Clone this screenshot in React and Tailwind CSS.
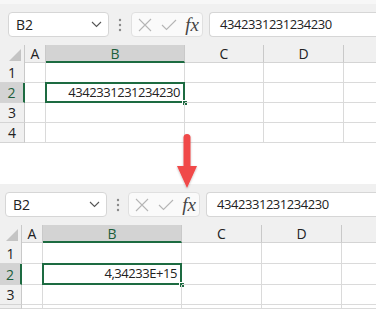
import React from "react";

function Chevron() {
  return (
    <svg width="11" height="7" viewBox="0 0 11 7">
      <path d="M1 1 L5.5 5.5 L10 1" fill="none" stroke="#555" strokeWidth="1.1" />
    </svg>
  );
}

function Dots() {
  return (
    <svg width="4" height="14" viewBox="0 0 4 14">
      <circle cx="2" cy="2" r="1.2" fill="#8a8a8a" />
      <circle cx="2" cy="7" r="1.2" fill="#8a8a8a" />
      <circle cx="2" cy="12" r="1.2" fill="#8a8a8a" />
    </svg>
  );
}

function CrossIcon() {
  return (
    <svg width="14" height="14" viewBox="0 0 14 14">
      <path d="M1 1 L13 13 M13 1 L1 13" stroke="#b5b5b5" strokeWidth="1.1" fill="none" />
    </svg>
  );
}

function CheckIcon() {
  return (
    <svg width="16" height="12" viewBox="0 0 16 12">
      <path d="M1 6 L5.5 10.5 L15 1" stroke="#b5b5b5" strokeWidth="1.1" fill="none" />
    </svg>
  );
}

function Toolbar({ pad, nameW, dotsW, btnW, formula }) {
  return (
    <div className={`flex items-start bg-[#f0f0f0] pb-[8px] pt-[8px] ${pad}`}>
      <div
        className={`flex h-[25px] items-center justify-between rounded-[4px] border border-[#d6d6d6] bg-white pl-[7px] pr-[6px] text-[14px] text-[#222] ${nameW}`}
      >
        <span>B2</span>
        <Chevron />
      </div>
      <div className={`flex h-[25px] items-center justify-center ${dotsW}`}>
        <Dots />
      </div>
      <div
        className={`flex h-[25px] items-center justify-between rounded-[4px] border border-[#e0e0e0] bg-[#fafafa] pl-[6px] pr-[3px] ${btnW}`}
      >
        <CrossIcon />
        <CheckIcon />
        <span className="font-['Liberation_Serif',serif] text-[19px] italic leading-none text-[#444]">fx</span>
      </div>
      <div className="ml-[6px] flex h-[25px] flex-1 items-center rounded-l-[4px] border border-r-0 border-[#d6d6d6] bg-white pl-[10px] text-[13px] tracking-[-0.45px] text-[#222]">
        {formula}
      </div>
    </div>
  );
}

function HeaderCell({ w, sel, last, children }) {
  return (
    <div
      className={`flex h-full items-center justify-center text-[14px] ${
        sel ? "border-b-2 border-b-[#1d6b41] bg-[#d3d3d3] text-[#1d5e3a]" : "border-b border-b-[#d4d4d4] text-[#222]"
      } ${last ? "flex-1" : `border-r border-r-[#c9c9c9] ${w}`}`}
    >
      {children}
    </div>
  );
}

function Cell({ w, last, sel, value }) {
  return (
    <div className={`relative border-b border-[#dadada] ${last ? "flex-1" : `border-r ${w}`}`}>
      {sel && (
        <>
          <div className="absolute -inset-px flex items-center justify-end border-2 border-[#1d6b41] pr-[3px] text-[13px] tracking-[-0.45px] text-[#222]">
            {value}
          </div>
          <div className="absolute -bottom-[4px] -right-[4px] h-[6px] w-[6px] border border-white bg-[#1d6b41]" />
        </>
      )}
    </div>
  );
}

function Row({ h, corner, cols, num, sel, value }) {
  return (
    <div className={`flex ${h}`}>
      <div
        className={`flex items-center justify-center border-b border-[#d4d4d4] text-[14px] ${corner} ${
          sel ? "border-r-2 border-r-[#1d6b41] bg-[#d3d3d3] text-[#1d5e3a]" : "border-r border-r-[#c9c9c9] bg-[#f0f0f0] text-[#222]"
        }`}
      >
        {num}
      </div>
      {cols.map((w, c) => (
        <Cell key={c} w={w} last={c === 4} sel={sel && c === 1} value={value} />
      ))}
    </div>
  );
}

function Grid({ corner, cols, value, rowHs, partial }) {
  const letters = ["A", "B", "C", "D", ""];
  return (
    <div className="flex flex-col">
      <div className="flex h-[18px] bg-[#f0f0f0]">
        <div className={`relative h-full border-r border-[#c9c9c9] ${corner}`}>
          <svg className="absolute bottom-[2px] right-[3px]" width="12" height="12" viewBox="0 0 12 12">
            <polygon points="12,0 12,12 0,12" fill="#c4c4c4" />
          </svg>
        </div>
        {letters.map((l, i) => (
          <HeaderCell key={i} w={cols[i]} sel={l === "B"} last={i === 4}>
            {l}
          </HeaderCell>
        ))}
      </div>
      <Row h={rowHs[0]} corner={corner} cols={cols} num="1" />
      <Row h={rowHs[1]} corner={corner} cols={cols} num="2" sel value={value} />
      <Row h={rowHs[2]} corner={corner} cols={cols} num="3" />
      <Row h={rowHs[3]} corner={corner} cols={cols} num={partial ? "" : "4"} />
    </div>
  );
}

export default function App() {
  return (
    <div className="relative h-[319px] w-[376px] overflow-hidden bg-white font-['Open_Sans','Noto_Sans',sans-serif]">
      <div className="h-[4px] bg-[#f7f7f7]" />
      <Toolbar pad="pl-[8px]" nameW="w-[101px]" dotsW="w-[22px]" btnW="w-[72px]" formula="4342331231234230" />
      <Grid
        corner="w-[25px]"
        cols={["w-[21px]", "w-[139px]", "w-[79px]", "w-[80px]", ""]}
        rowHs={["h-[20px]", "h-[20px]", "h-[20px]", "h-[20px]"]}
        value="4342331231234230"
      />
      <div className="h-[41px]" />
      <Toolbar pad="pl-[5px]" nameW="w-[102px]" dotsW="w-[21px]" btnW="w-[72px]" formula="4342331231234230" />
      <Grid
        corner="w-[22px]"
        cols={["w-[21px]", "w-[139px]", "w-[80px]", "w-[80px]", ""]}
        rowHs={["h-[21px]", "h-[21px]", "h-[20px]", "h-[4px]"]}
        value="4,34233E+15"
        partial
      />
      <svg className="absolute left-[176px] top-[132px]" width="22" height="58" viewBox="0 0 22 58">
        <defs>
          <filter id="sh" x="-50%" y="-50%" width="200%" height="200%">
            <feDropShadow dx="0" dy="1" stdDeviation="1" floodColor="#000" floodOpacity="0.25" />
          </filter>
        </defs>
        <g filter="url(#sh)">
          <rect x="7.5" y="2" width="7" height="36" rx="3.5" fill="#f04848" />
          <polygon points="1,34 21,34 11,56" fill="#f04848" />
        </g>
      </svg>
    </div>
  );
}
